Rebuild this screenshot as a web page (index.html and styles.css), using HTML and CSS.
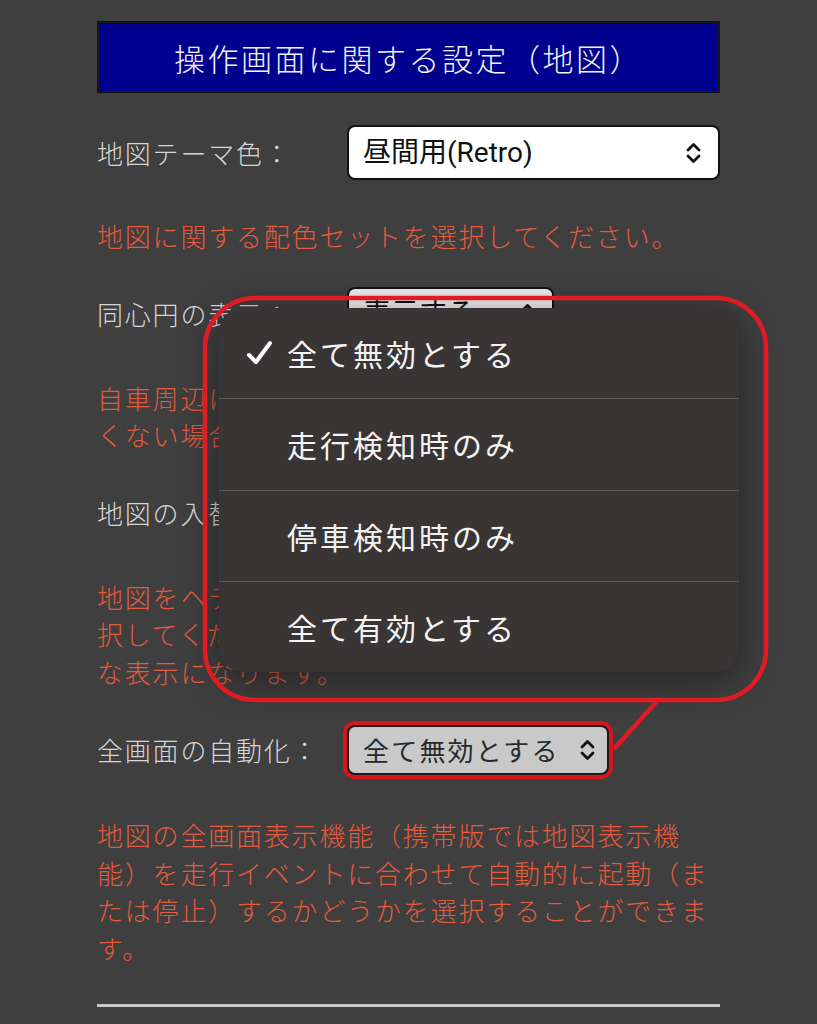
FILE: index.html
```html
<!DOCTYPE html>
<html lang="ja">
<head>
<meta charset="utf-8">
<link rel="stylesheet" href="styles.css">
</head>
<body>
<div class="page">
  <h1 class="header">操作画面に関する設定（地図）</h1>

  <div class="row">
    <span class="label">地図テーマ色：</span>
    <span class="select select-wide"><span class="select-text">昼間用(Retro)</span>
      <svg class="chev" viewBox="0 0 14 22"><polyline points="1.5,8 7,2.5 12.5,8"/><polyline points="1.5,14 7,19.5 12.5,14"/></svg>
    </span>
  </div>
  <p class="desc">地図に関する配色セットを選択してください。</p>

  <div class="row">
    <span class="label">同心円の表示：</span>
    <span class="select select-mid"><span class="select-text">表示する</span>
      <svg class="chev" viewBox="0 0 14 22"><polyline points="1.5,8 7,2.5 12.5,8"/><polyline points="1.5,14 7,19.5 12.5,14"/></svg>
    </span>
  </div>
  <p class="desc">自車周辺に同心円を表示する機能です。表示したくない場合は「しない」を選択してください。</p>

  <div class="row">
    <span class="label">地図の入替：</span>
    <span class="select select-mid"><span class="select-text">有効</span>
      <svg class="chev" viewBox="0 0 14 22"><polyline points="1.5,8 7,2.5 12.5,8"/><polyline points="1.5,14 7,19.5 12.5,14"/></svg>
    </span>
  </div>
  <p class="desc">地図をヘディングアップ表示にするかどうかを選択してください。無効の場合は、北が上の固定的な表示になります。</p>

  <div class="row row-last">
    <span class="label">全画面の自動化：</span>
    <span class="highlight">
      <span class="select select-gray"><span class="select-text">全て無効とする</span>
        <svg class="chev" viewBox="0 0 14 22"><polyline points="1.5,8 7,2.5 12.5,8"/><polyline points="1.5,14 7,19.5 12.5,14"/></svg>
      </span>
    </span>
  </div>
  <p class="desc">地図の全画面表示機能（携帯版では地図表示機能）を走行イベントに合わせて自動的に起動（または停止）するかどうかを選択することができます。</p>

  <hr class="rule">
</div>

<div class="menu">
  <div class="menu-item">
    <svg class="check" viewBox="0 0 28 28"><polyline points="3,15 10,22 24,3"/></svg>
    全て無効とする
  </div>
  <div class="menu-item">走行検知時のみ</div>
  <div class="menu-item">停車検知時のみ</div>
  <div class="menu-item">全て有効とする</div>
</div>

<svg class="callout" viewBox="0 0 817 1024">
  <path d="M257 298 H716 A50 50 0 0 1 766 348 V650 A50 50 0 0 1 716 700 H255 A50 50 0 0 1 205 650 V348 A50 50 0 0 1 255 298 Z"/>
  <line x1="658" y1="700" x2="614" y2="749"/>
</svg>
</body>
</html>
```

FILE: styles.css
```css
html, body {
  margin: 0;
  padding: 0;
}
body {
  background: #3f3f3f;
  width: 817px;
  height: 1024px;
  overflow: hidden;
  position: relative;
  font-family: "Noto Sans CJK JP", sans-serif;
}
.page {
  padding: 21px 97px 0 97px;
  width: 623px;
}
.header {
  margin: 0;
  box-sizing: border-box;
  height: 72px;
  background: #00008e;
  border: 2px solid #161616;
  color: #f2f2f2;
  font-weight: 300;
  font-size: 31px;
  letter-spacing: 2.5px;
  display: flex;
  align-items: center;
  justify-content: center;
  line-height: 1;
}
.row {
  display: flex;
  align-items: center;
  margin-top: 32px;
  height: 55px;
}
.row-last {
  height: 58px;
  margin-top: 31px;
}
.label {
  width: 250px;
  flex: none;
  color: #d6d6d6;
  font-size: 26px;
  font-weight: 300;
  letter-spacing: 1.8px;
  line-height: 1;
}
.select {
  box-sizing: border-box;
  display: flex;
  align-items: center;
  justify-content: space-between;
  background: #ffffff;
  border: 2px solid #111;
  border-radius: 8px;
  height: 100%;
  padding: 0 17px 0 14px;
  color: #111;
  font-family: Roboto, "Noto Sans CJK JP", sans-serif;
  font-size: 28px;
  line-height: 1;
}
.select-wide {
  width: 373px;
}
.select-mid {
  width: 207px;
  background: #ececec;
}
.select-text {
  letter-spacing: 0;
}
.highlight {
  display: flex;
  height: 100%;
  box-sizing: border-box;
  margin-left: -4px;
  border: 4px solid #d8141c;
  border-radius: 12px;
}
.select-gray {
  width: 262px;
  background: #c9c9c9;
  border-color: #1a1a1a;
  padding: 0 12px 0 14px;
  color: #2a2a2a;
  font-family: "Noto Sans CJK JP", sans-serif;
  font-size: 26px;
}
.select-gray .select-text {
  letter-spacing: 2.2px;
}
.chev {
  width: 15px;
  height: 22px;
  flex: none;
  fill: none;
  stroke: #111;
  stroke-width: 2.8;
  stroke-linecap: round;
  stroke-linejoin: round;
}
.desc {
  margin: 37px 0 0 0;
  color: #e55a3d;
  font-size: 26px;
  font-weight: 300;
  letter-spacing: 1.8px;
  line-height: 37.5px;
}
.rule {
  margin: 38px 0 0 0;
  border: none;
  height: 3px;
  background: #c9c9c9;
}
.menu {
  position: absolute;
  left: 219px;
  top: 308px;
  width: 520px;
  height: 364px;
  border-radius: 24px;
  background: #393535;
  box-shadow: 0 8px 40px rgba(0, 0, 0, 0.45);
  overflow: hidden;
  display: flex;
  flex-direction: column;
}
.menu-item {
  position: relative;
  flex: 1;
  display: flex;
  align-items: center;
  padding-left: 68px;
  color: #f4f4f4;
  font-size: 30px;
  letter-spacing: 3px;
  line-height: 1;
}
.menu-item + .menu-item {
  border-top: 1px solid #5e5b5b;
}
.check {
  position: absolute;
  left: 27px;
  top: 32px;
  width: 28px;
  height: 28px;
  fill: none;
  stroke: #ffffff;
  stroke-width: 4;
  stroke-linecap: round;
  stroke-linejoin: round;
}
.callout {
  position: absolute;
  left: 0;
  top: 0;
  width: 817px;
  height: 1024px;
  pointer-events: none;
  fill: none;
  stroke: #e11b24;
  stroke-width: 4.5;
}
```
